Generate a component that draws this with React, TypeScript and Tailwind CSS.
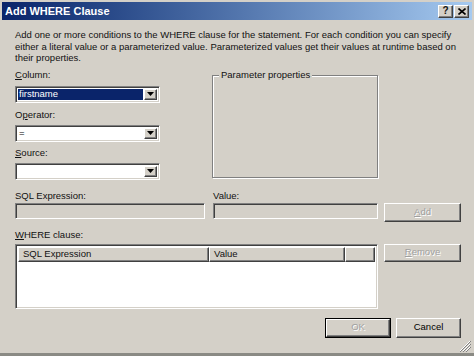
import React from "react";

const font = "[font-family:'Liberation_Sans',Arial,sans-serif]";
const sunken =
  "border border-t-[#808080] border-l-[#808080] border-b-white border-r-white shadow-[inset_1px_1px_0_#404040,inset_-1px_-1px_0_#d4d0c8]";
const raised =
  "border border-t-white border-l-white border-b-[#404040] border-r-[#404040] shadow-[inset_-1px_-1px_0_#808080]";

function U({ children }: { children: React.ReactNode }) {
  return <span className="underline underline-offset-1">{children}</span>;
}

function Combo({ value, selected }: { value?: string; selected?: boolean }) {
  return (
    <div className={`${sunken} bg-white h-[17px] w-[145px] flex items-stretch p-[2px]`}>
      <div className="flex-1 flex items-center">
        {value && (
          <span
            className={`h-full w-full flex items-center pl-[1px] leading-none ${
              selected ? "bg-[#0a246a] text-white" : "text-black"
            }`}
          >
            {value}
          </span>
        )}
      </div>
      <div className={`${raised} bg-[#d4d0c8] w-[13px] flex items-center justify-center ml-[1px]`}>
        <svg width="7" height="4" viewBox="0 0 7 4">
          <path d="M0 0h7L3.5 4z" fill="#000" />
        </svg>
      </div>
    </div>
  );
}

function Btn({ children, disabled, def, w = "w-[77px]", h = "h-[19px]" }: { children: React.ReactNode; disabled?: boolean; def?: boolean; w?: string; h?: string }) {
  const inner = (
    <div
      className={`${raised} bg-[#d4d0c8] h-full w-full flex items-center justify-center ${
        disabled ? "text-[#a0a0a0] [text-shadow:1px_1px_0_#fff]" : "text-black"
      }`}
    >
      {children}
    </div>
  );
  if (def) {
    return <div className={`${w} ${h} border border-black`}>{inner}</div>;
  }
  return <div className={`${w} ${h}`}>{inner}</div>;
}

export default function App() {
  return (
    <div className={`${font} w-[474px] h-[356px] bg-[#d4d0c8] text-[9.5px] text-[#111] relative overflow-hidden`}>
      {/* title bar */}
      <div className="mx-[2px] mt-[2px] h-[18px] bg-gradient-to-r from-[#0a246a] to-[#a6caf0] flex items-center pl-[3px] pr-[3px]">
        <span className="text-white font-bold text-[11px] flex-1">Add WHERE Clause</span>
        <div className={`${raised} bg-[#d4d0c8] w-[15px] h-[13px] flex items-center justify-center font-bold text-[10px] leading-none`}>?</div>
        <div className={`${raised} bg-[#d4d0c8] w-[15px] h-[13px] flex items-center justify-center ml-[1px]`}>
          <svg width="8" height="7" viewBox="0 0 8 7">
            <path d="M0.5 0.5l7 6M7.5 0.5l-7 6" stroke="#000" strokeWidth="1.6" />
          </svg>
        </div>
      </div>

      <div className="pl-[15px] pr-[13px]">
        <p className="mt-[9px] leading-[11.5px] w-[446px]">
          Add one or more conditions to the WHERE clause for the statement. For each condition you can specify either a literal value or a parameterized value. Parameterized values get their values at runtime based on their properties.
        </p>

        <div className="flex mt-[5px]">
          <div className="w-[145px]">
            <div className="h-[12px] leading-[12px]"><U>C</U>olumn:</div>
            <div className="mt-[5px]"><Combo value="firstname" selected /></div>
            <div className="h-[12px] leading-[12px] mt-[6px]">O<U>p</U>erator:</div>
            <div className="mt-[4px]"><Combo value="=" /></div>
            <div className="h-[12px] leading-[12px] mt-[5px]"><U>S</U>ource:</div>
            <div className="mt-[4px]"><Combo /></div>
          </div>
          <div className="ml-[52px] mt-[6px] w-[166px] h-[103px] border border-[#808080] shadow-[1px_1px_0_#fff,inset_1px_1px_0_#fff] relative">
            <span className="absolute -top-[7px] left-[6px] bg-[#d4d0c8] px-[2px] leading-[12px]">Parameter properties</span>
          </div>
        </div>

        <div className="flex mt-[10px] h-[12px] leading-[12px]">
          <div className="w-[198px]">SQL Expression:</div>
          <div>Value:</div>
        </div>
        <div className="flex mt-[1px] items-start">
          <div className={`${sunken} w-[190px] h-[16px] bg-[#d4d0c8]`} />
          <div className={`${sunken} w-[165px] h-[16px] bg-[#d4d0c8] ml-[8px]`} />
          <div className="ml-[6px]">
            <Btn disabled><U>A</U>dd</Btn>
          </div>
        </div>

        <div className="mt-[7px] h-[12px] leading-[12px]"><U>W</U>HERE clause:</div>
        <div className="flex mt-[3px] items-start">
          <div className={`${sunken} w-[363px] h-[65px] bg-white p-[2px]`}>
            <div className="flex h-[15px]">
              <div className={`${raised} bg-[#d4d0c8] w-[191px] pl-[4px] flex items-center`}>SQL Expression</div>
              <div className={`${raised} bg-[#d4d0c8] w-[136px] pl-[4px] flex items-center`}>Value</div>
              <div className={`${raised} bg-[#d4d0c8] flex-1`} />
            </div>
          </div>
          <div className="ml-[6px]">
            <Btn disabled h="h-[18px]"><U>R</U>emove</Btn>
          </div>
        </div>

        <div className="flex justify-end mt-[9px]">
          <Btn disabled def w="w-[66px]" h="h-[20px]">OK</Btn>
          <div className="ml-[5px]">
            <Btn w="w-[65px]" h="h-[20px]">Cancel</Btn>
          </div>
        </div>
      </div>

      {/* size grip */}
      <svg className="absolute right-[3px] bottom-[4px]" width="12" height="12" viewBox="0 0 12 12">
        <path d="M11 1L1 11M11 4L4 11M11 7L7 11" stroke="#fff" strokeWidth="1" />
        <path d="M12 1L1 12M12 4L4 12M12 7L7 12" stroke="#808080" strokeWidth="1" />
      </svg>
      <div className="absolute left-0 right-0 bottom-0 h-[3px] bg-[#8a8a84]" />
    </div>
  );
}
